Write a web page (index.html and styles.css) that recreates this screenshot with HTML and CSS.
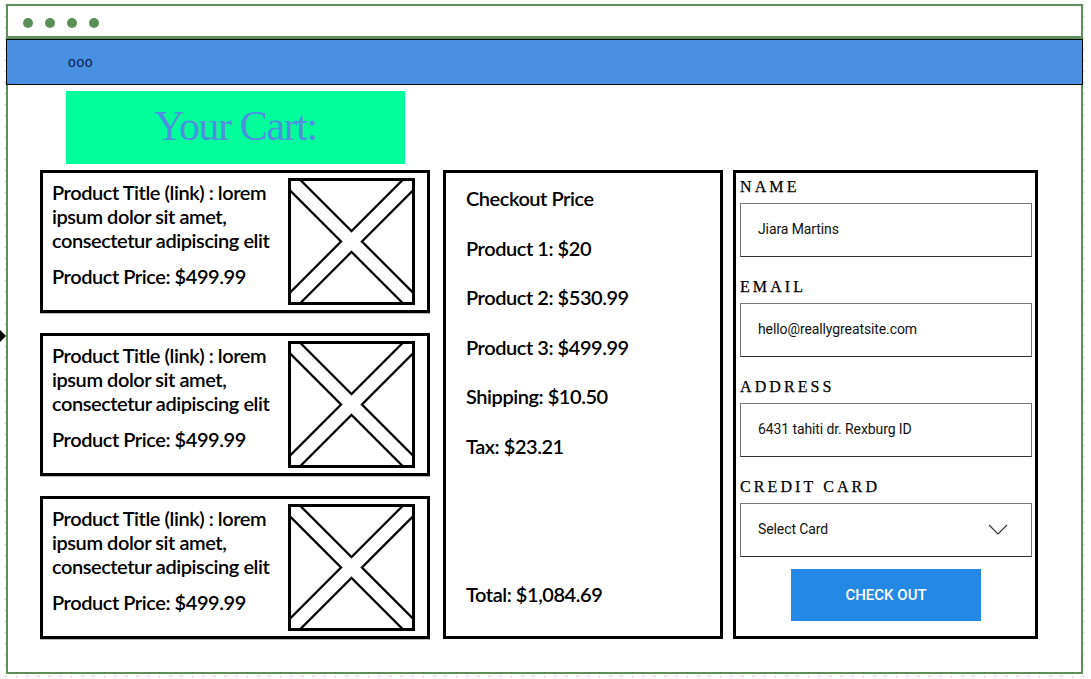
FILE: index.html
```html
<!DOCTYPE html>
<html>
<head>
<meta charset="utf-8">
<title>Your Cart</title>
<link rel="stylesheet" href="styles.css">
</head>
<body>
<span class="edge-arrow"></span>
<div class="frame">
  <div class="topbar">
    <span class="dot"></span><span class="dot"></span><span class="dot"></span><span class="dot"></span>
  </div>
  <nav class="nav"><span class="menu">ooo</span></nav>
  <main class="main">
    <div class="banner"><h1>Your Cart:</h1></div>
    <div class="columns">
      <div class="cards">
        <div class="card">
          <div class="card-text">
            <a class="title">Product Title (link) : lorem ipsum dolor sit amet, consectetur adipiscing elit</a>
            <p class="price">Product Price: $499.99</p>
          </div>
          <svg class="ph" viewBox="0 0 127 127"><line x1="0" y1="0" x2="127" y2="127" class="b"/><line x1="127" y1="0" x2="0" y2="127" class="b"/><line x1="0" y1="0" x2="127" y2="127" class="w"/><line x1="127" y1="0" x2="0" y2="127" class="w"/><rect x="1.5" y="1.5" width="124" height="124" class="r"/></svg>
        </div>
        <div class="card">
          <div class="card-text">
            <a class="title">Product Title (link) : lorem ipsum dolor sit amet, consectetur adipiscing elit</a>
            <p class="price">Product Price: $499.99</p>
          </div>
          <svg class="ph" viewBox="0 0 127 127"><line x1="0" y1="0" x2="127" y2="127" class="b"/><line x1="127" y1="0" x2="0" y2="127" class="b"/><line x1="0" y1="0" x2="127" y2="127" class="w"/><line x1="127" y1="0" x2="0" y2="127" class="w"/><rect x="1.5" y="1.5" width="124" height="124" class="r"/></svg>
        </div>
        <div class="card">
          <div class="card-text">
            <a class="title">Product Title (link) : lorem ipsum dolor sit amet, consectetur adipiscing elit</a>
            <p class="price">Product Price: $499.99</p>
          </div>
          <svg class="ph" viewBox="0 0 127 127"><line x1="0" y1="0" x2="127" y2="127" class="b"/><line x1="127" y1="0" x2="0" y2="127" class="b"/><line x1="0" y1="0" x2="127" y2="127" class="w"/><line x1="127" y1="0" x2="0" y2="127" class="w"/><rect x="1.5" y="1.5" width="124" height="124" class="r"/></svg>
        </div>
      </div>
      <section class="checkout">
        <p>Checkout Price</p>
        <p>Product 1: $20</p>
        <p>Product 2: $530.99</p>
        <p>Product 3: $499.99</p>
        <p>Shipping: $10.50</p>
        <p>Tax: $23.21</p>
        <p class="total">Total: $1,084.69</p>
      </section>
      <form class="form">
        <label class="label">NAME</label>
        <div class="field">Jiara Martins</div>
        <label class="label">EMAIL</label>
        <div class="field">hello@reallygreatsite.com</div>
        <label class="label">ADDRESS</label>
        <div class="field">6431 tahiti dr. Rexburg ID</div>
        <label class="label">CREDIT CARD</label>
        <div class="field select">Select Card
          <svg class="chev" viewBox="0 0 20 11"><polyline points="1,1 10,10 19,1"/></svg>
        </div>
        <button type="button" class="btn">CHECK OUT</button>
      </form>
    </div>
  </main>
</div>
</body>
</html>
```
FILE: styles.css
```css
* { box-sizing: border-box; }
html, body { margin: 0; padding: 0; }
body {
  width: 1091px;
  height: 679px;
  background-color: #fff;
  background-image: radial-gradient(circle, #d4d4d4 0.8px, transparent 1.2px);
  background-size: 11px 11px;
  font-family: "Lato", "Liberation Sans", sans-serif;
  overflow: hidden;
  position: relative;
}
.edge-arrow {
  position: absolute;
  left: 0;
  top: 330px;
  width: 0;
  height: 0;
  border-top: 6px solid transparent;
  border-bottom: 6px solid transparent;
  border-left: 6px solid #000;
}
.frame {
  margin: 4px 0 0 6px;
  width: 1077px;
  height: 670px;
  border: 2px solid #5f8d5b;
  background: #fff;
  display: flex;
  flex-direction: column;
}
.topbar {
  height: 33px;
  border-bottom: 3px solid #5f8d5b;
  display: flex;
  align-items: center;
  gap: 12px;
  padding-left: 15px;
  padding-top: 3px;
}
.dot {
  width: 10px;
  height: 10px;
  border-radius: 50%;
  background: #5b8f58;
}
.nav {
  margin: 0 -2px;
  height: 46px;
  background: #4a90e2;
  border: 1px solid #000;
  display: flex;
  align-items: center;
  padding-left: 61px;
}
.menu {
  font-family: "Liberation Sans", sans-serif;
  font-size: 14px;
  color: #0c1a4e;
  letter-spacing: 0.6px;
  line-height: 1;
  padding-bottom: 1px;
}
.main {
  padding: 6px 0 0 32px;
}
.banner {
  margin-left: 26px;
  width: 339px;
  height: 73px;
  background: #00ff9a;
  display: flex;
  align-items: center;
  justify-content: center;
}
.banner h1 {
  margin: 0;
  font-family: "Liberation Serif", serif;
  font-weight: 400;
  font-size: 42px;
  letter-spacing: -1.4px;
  color: #4d8fe0;
  line-height: 1;
  padding-bottom: 4px;
}
.columns {
  margin-top: 6px;
  display: flex;
  align-items: stretch;
}
.cards {
  width: 390px;
  display: flex;
  flex-direction: column;
  gap: 20px;
}
.card {
  height: 143px;
  border: 3px solid #000;
  display: flex;
  box-shadow: 0 1px 0 #bbb;
}
.card-text {
  flex: 1;
  padding: 7px 8px 0 9px;
  font-size: 20px;
  font-weight: 600;
  line-height: 24px;
  color: #000;
  letter-spacing: -0.45px;
}
.title { display: block; color: #000; text-decoration: none; }
.price { margin: 12px 0 0; }
.ph {
  flex: none;
  width: 127px;
  height: 127px;
  margin: 5px 12px 5px 0;
}
.ph .b { stroke: #000; stroke-width: 17; }
.ph .w { stroke: #fff; stroke-width: 12.5; }
.ph .r { fill: none; stroke: #000; stroke-width: 3; }
.checkout {
  margin-left: 13px;
  width: 280px;
  border: 3px solid #000;
  padding: 13px 10px 30px 20px;
  display: flex;
  flex-direction: column;
  gap: 25.6px;
  font-size: 20px;
  font-weight: 600;
  line-height: 24px;
  letter-spacing: -0.45px;
}
.checkout p { margin: 0; }
.checkout .total { margin-top: auto; }
.form {
  margin: 0 0 0 10px;
  width: 305px;
  border: 3px solid #000;
  padding: 4px 3px 0 4px;
  display: flex;
  flex-direction: column;
}
.label {
  font-family: "Liberation Serif", serif;
  font-size: 16px;
  line-height: 19px;
  letter-spacing: 3.1px;
  color: #000;
  margin-bottom: 7px;
  -webkit-text-stroke: 0.25px #000;
}
.field {
  height: 54px;
  border: 1px solid #777;
  border-bottom-color: #333;
  margin-bottom: 20px;
  display: flex;
  align-items: center;
  padding-left: 17px;
  padding-bottom: 2px;
  font-family: "Roboto", "Liberation Sans", sans-serif;
  font-size: 14px;
  letter-spacing: -0.1px;
  color: #111;
}
.field.select {
  margin-bottom: 12px;
  justify-content: space-between;
  padding-right: 23px;
}
.chev {
  width: 20px;
  height: 11px;
}
.chev polyline { fill: none; stroke: #333; stroke-width: 1.2; }
.btn {
  align-self: center;
  width: 190px;
  height: 52px;
  border: none;
  background: #2389e4;
  color: #fff;
  font-family: "Roboto", "Liberation Sans", sans-serif;
  font-size: 15px;
  font-weight: 500;
  padding: 0;
}
```
